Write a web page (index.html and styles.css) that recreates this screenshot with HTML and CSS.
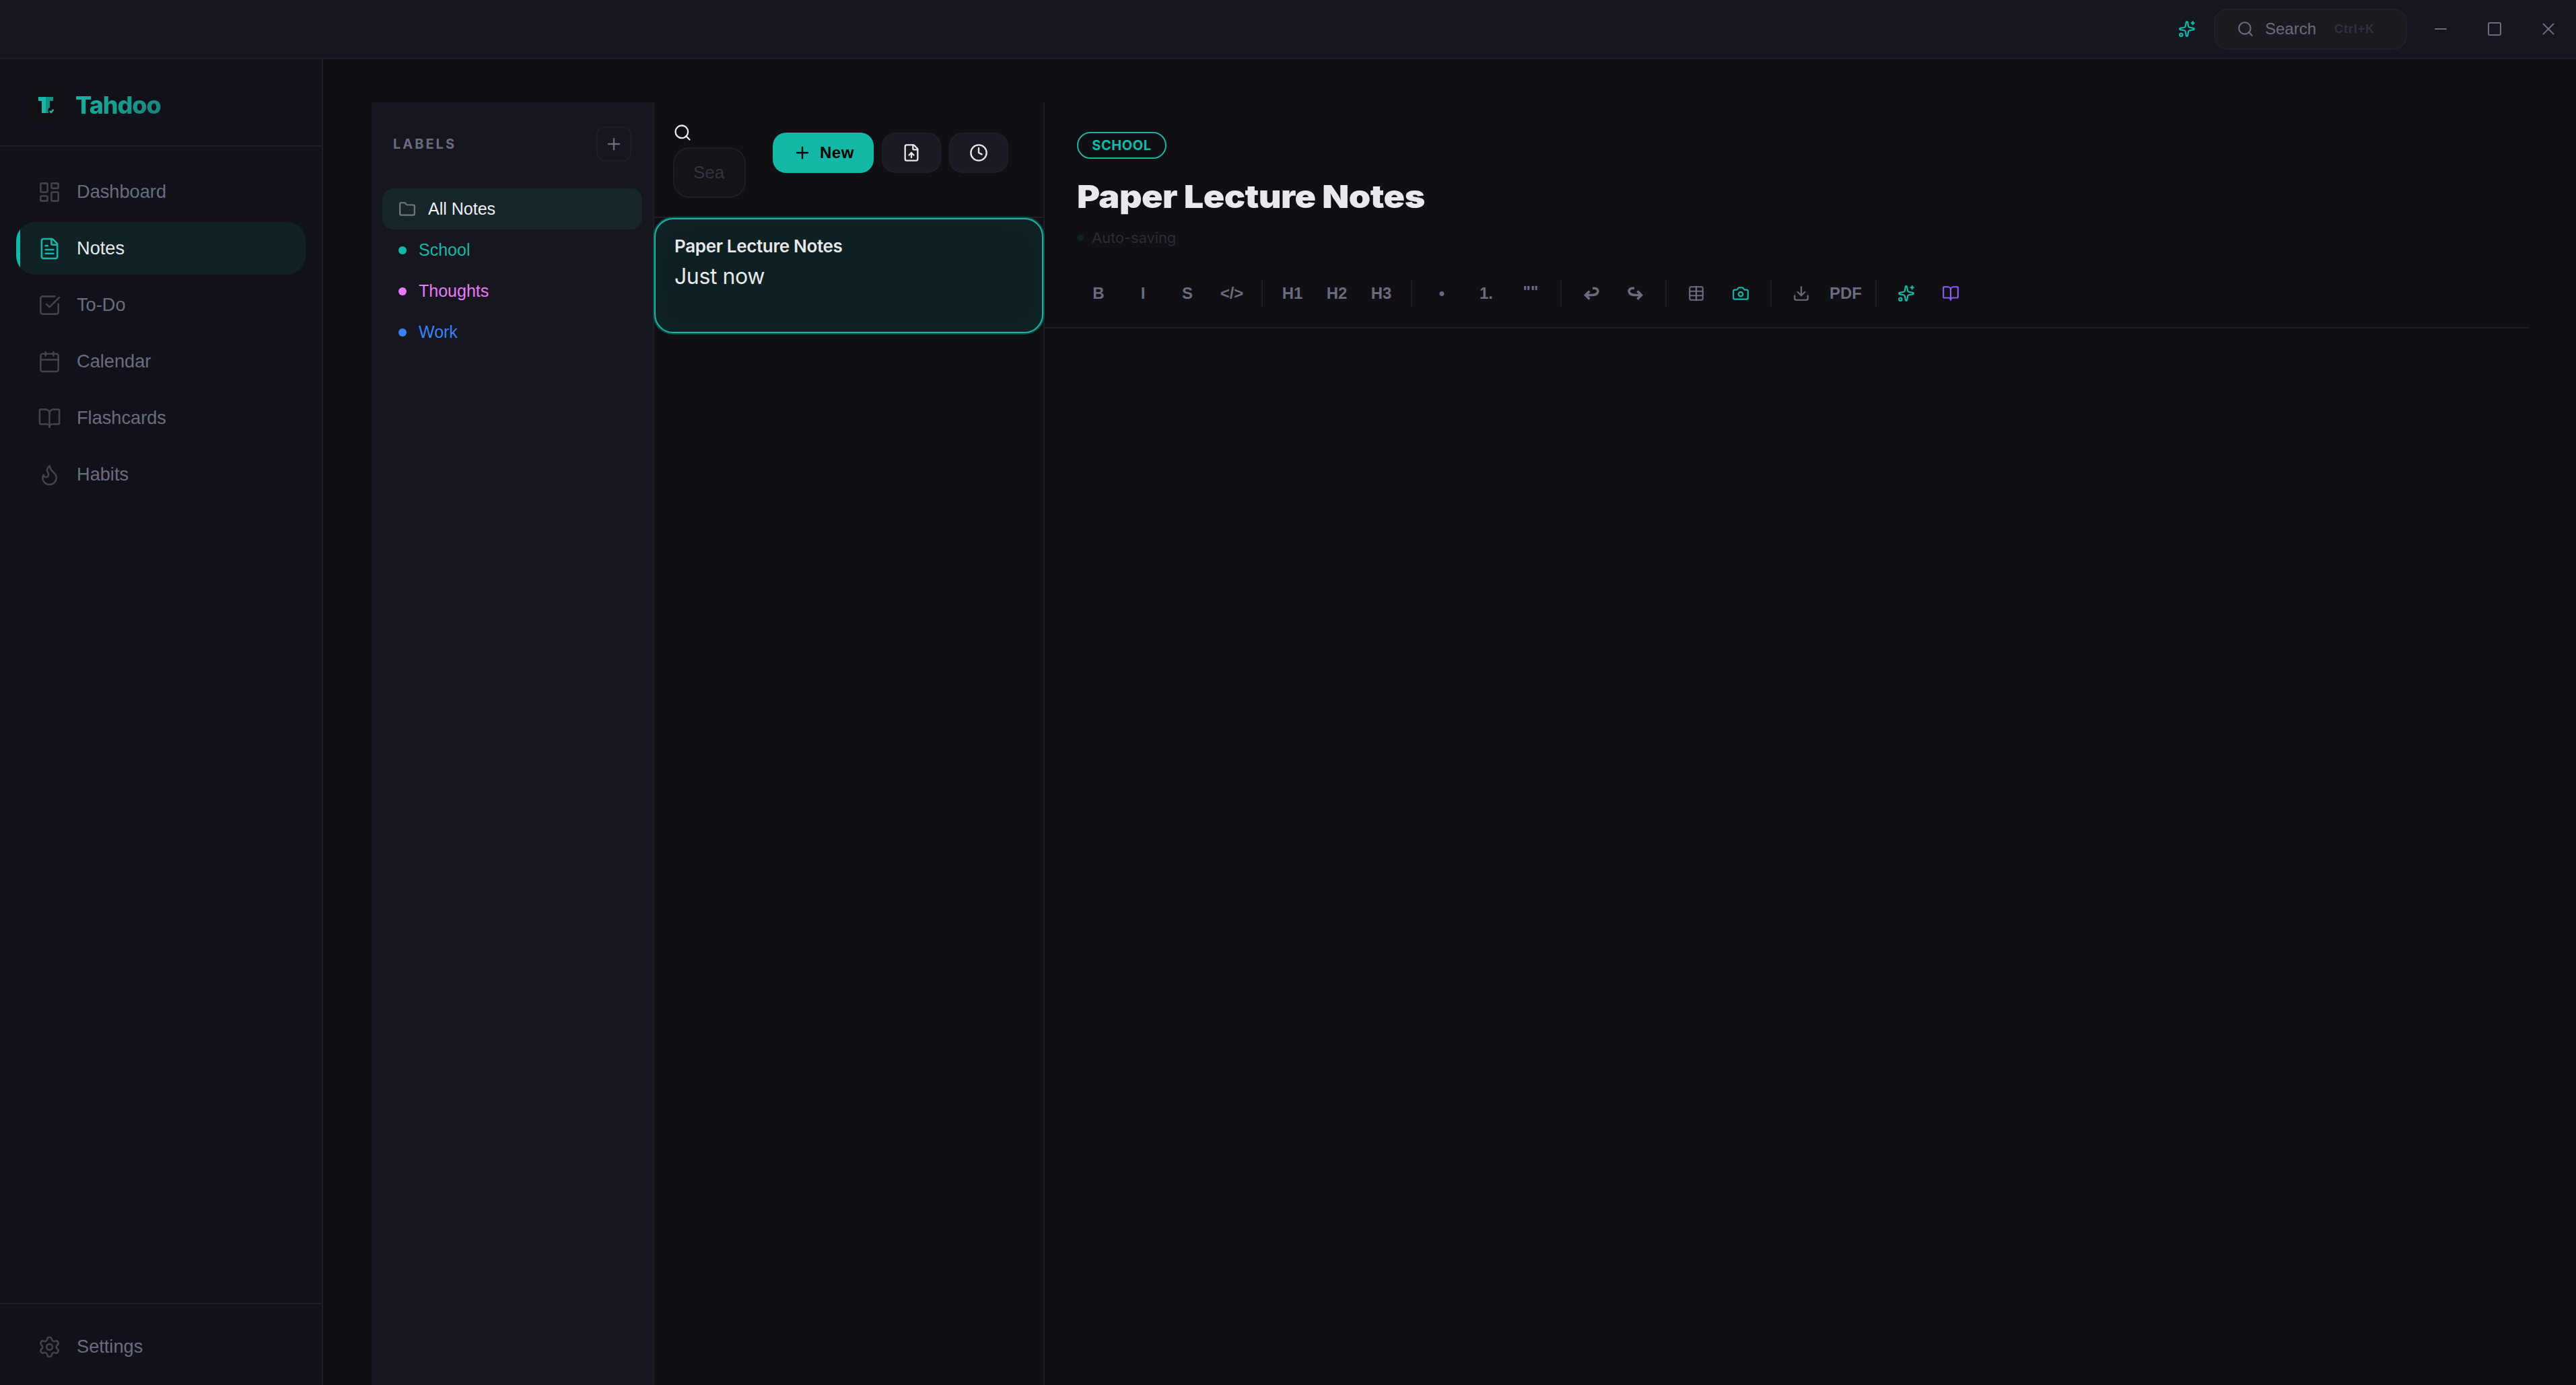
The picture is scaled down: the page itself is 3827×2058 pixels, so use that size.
FILE: index.html
```html
<!DOCTYPE html>
<html lang="en">

<head>
    <meta charset="UTF-8">
    <meta name="viewport" content="width=device-width, initial-scale=1.0">
    <title>Tahdoo</title>
    <link rel="stylesheet" href="styles.css">
</head>

<body>

    <header class="titlebar">
        <button class="ai-button">
            <svg class="icon icon-26" viewBox="0 0 24 24"><path d="M11.017 2.814a1 1 0 0 1 1.966 0l1.051 5.558a2 2 0 0 0 1.594 1.594l5.558 1.051a1 1 0 0 1 0 1.966l-5.558 1.051a2 2 0 0 0-1.594 1.594l-1.051 5.558a1 1 0 0 1-1.966 0l-1.051-5.558a2 2 0 0 0-1.594-1.594l-5.558-1.051a1 1 0 0 1 0-1.966l5.558-1.051a2 2 0 0 0 1.594-1.594z"/><path d="M20 2v4"/><path d="M22 4h-4"/><circle cx="4" cy="20" r="2"/></svg>
        </button>
        <button class="search-button">
            <svg class="icon icon-26" viewBox="0 0 24 24"><circle cx="11" cy="11" r="8"/><path d="m21 21-4.34-4.34"/></svg>
            <span>Search</span>
            <span class="shortcut">Ctrl+K</span>
        </button>
        <div class="window-controls">
            <button><svg class="icon icon-28" viewBox="0 0 28 28"><path d="M6 14h16"/></svg></button>
            <button><svg class="icon icon-28" viewBox="0 0 28 28"><rect x="5" y="5" width="18" height="18" rx="2"/></svg></button>
            <button><svg class="icon icon-28" viewBox="0 0 28 28"><path d="M21.5 6.5l-15 15"/><path d="M6.5 6.5l15 15"/></svg></button>
        </div>
    </header>

    <div class="app">
        <aside class="sidebar">
            <div class="logo">
                <svg class="logo-image" viewBox="0 0 48 48">
                    <rect width="48" height="48" rx="9" fill="#111115"/>
                    <path d="M13 12h11v24h-6V18h-5z" fill="#18b5a5"/>
                    <path d="M24 12h11v6h-5v9.5c-2 1-3 3-2.5 5.5l.8 3H24z" fill="#12917f"/>
                    <path d="M29.8 32.8l2.2 2.2 3.4-4.2" fill="none" stroke="#28b5a3" stroke-width="2.4"/>
                </svg>
                <span class="logo-text">Tahdoo</span>
            </div>

            <nav class="menu">
                <button class="menu-item">
                    <svg class="icon icon-35" viewBox="0 0 24 24"><rect width="7" height="9" x="3" y="3" rx="1"/><rect width="7" height="5" x="14" y="3" rx="1"/><rect width="7" height="9" x="14" y="12" rx="1"/><rect width="7" height="5" x="3" y="16" rx="1"/></svg>
                    <span>Dashboard</span>
                </button>
                <button class="menu-item active">
                    <svg class="icon icon-35" viewBox="0 0 24 24"><path d="M6 22a2 2 0 0 1-2-2V4a2 2 0 0 1 2-2h8a2.4 2.4 0 0 1 1.704.706l3.588 3.588A2.4 2.4 0 0 1 20 8v12a2 2 0 0 1-2 2z"/><path d="M14 2v5a1 1 0 0 0 1 1h5"/><path d="M10 9H8"/><path d="M16 13H8"/><path d="M16 17H8"/></svg>
                    <span>Notes</span>
                </button>
                <button class="menu-item">
                    <svg class="icon icon-35" viewBox="0 0 24 24"><path d="M21 10.656V19a2 2 0 0 1-2 2H5a2 2 0 0 1-2-2V5a2 2 0 0 1 2-2h12.344"/><path d="m9 11 3 3L22 4"/></svg>
                    <span>To-Do</span>
                </button>
                <button class="menu-item">
                    <svg class="icon icon-35" viewBox="0 0 24 24"><path d="M8 2v4"/><path d="M16 2v4"/><rect width="18" height="18" x="3" y="4" rx="2"/><path d="M3 10h18"/></svg>
                    <span>Calendar</span>
                </button>
                <button class="menu-item">
                    <svg class="icon icon-35" viewBox="0 0 24 24"><path d="M12 7v14"/><path d="M3 18a1 1 0 0 1-1-1V4a1 1 0 0 1 1-1h5a4 4 0 0 1 4 4 4 4 0 0 1 4-4h5a1 1 0 0 1 1 1v13a1 1 0 0 1-1 1h-6a3 3 0 0 0-3 3 3 3 0 0 0-3-3z"/></svg>
                    <span>Flashcards</span>
                </button>
                <button class="menu-item">
                    <svg class="icon icon-35" viewBox="0 0 24 24"><path d="M12 3q1 4 4 6.5t3 5.5a1 1 0 0 1-14 0 5 5 0 0 1 1-3 1 1 0 0 0 5 0c0-2-1.5-3-1.5-5q0-2 2.5-4"/></svg>
                    <span>Habits</span>
                </button>
            </nav>

            <div class="sidebar-footer">
                <button class="menu-item">
                    <svg class="icon icon-35" viewBox="0 0 24 24"><path d="M9.671 4.136a2.34 2.34 0 0 1 4.659 0 2.34 2.34 0 0 0 3.319 1.915 2.34 2.34 0 0 1 2.33 4.033 2.34 2.34 0 0 0 0 3.831 2.34 2.34 0 0 1-2.33 4.033 2.34 2.34 0 0 0-3.319 1.915 2.34 2.34 0 0 1-4.659 0 2.34 2.34 0 0 0-3.32-1.915 2.34 2.34 0 0 1-2.33-4.033 2.34 2.34 0 0 0 0-3.831A2.34 2.34 0 0 1 6.35 6.051a2.34 2.34 0 0 0 3.319-1.915"/><circle cx="12" cy="12" r="3"/></svg>
                    <span>Settings</span>
                </button>
            </div>
        </aside>

        <main class="notes-page">
            <section class="labels">
                <div class="labels-header">
                    <h2>LABELS</h2>
                    <button class="add-label">
                        <svg class="icon icon-28" viewBox="0 0 24 24"><path d="M5 12h14"/><path d="M12 5v14"/></svg>
                    </button>
                </div>
                <button class="label-item active">
                    <svg class="icon icon-26" viewBox="0 0 24 24"><path d="M20 20a2 2 0 0 0 2-2V8a2 2 0 0 0-2-2h-7.9a2 2 0 0 1-1.69-.9L9.6 3.9A2 2 0 0 0 7.93 3H4a2 2 0 0 0-2 2v13a2 2 0 0 0 2 2Z"/></svg>
                    All Notes
                </button>
                <button class="label-item school"><span class="dot"></span>School</button>
                <button class="label-item thoughts"><span class="dot"></span>Thoughts</button>
                <button class="label-item work"><span class="dot"></span>Work</button>
            </section>

            <section class="notes-list">
                <div class="list-header">
                    <div class="list-search">
                        <svg class="icon icon-28" viewBox="0 0 24 24"><circle cx="11" cy="11" r="8"/><path d="m21 21-4.34-4.34"/></svg>
                        <div class="search-input"><span>Sea</span></div>
                    </div>
                    <div class="list-actions">
                        <button class="new-button">
                            <svg class="icon icon-28" viewBox="0 0 24 24"><path d="M5 12h14"/><path d="M12 5v14"/></svg>
                            New
                        </button>
                        <button class="square-button">
                            <svg class="icon icon-28" viewBox="0 0 24 24"><path d="M6 22a2 2 0 0 1-2-2V4a2 2 0 0 1 2-2h8a2.4 2.4 0 0 1 1.704.706l3.588 3.588A2.4 2.4 0 0 1 20 8v12a2 2 0 0 1-2 2z"/><path d="M14 2v5a1 1 0 0 0 1 1h5"/><path d="M12 12v6"/><path d="m15 15-3-3-3 3"/></svg>
                        </button>
                        <button class="square-button">
                            <svg class="icon icon-28" viewBox="0 0 24 24"><circle cx="12" cy="12" r="10"/><path d="M12 6v6l4 2"/></svg>
                        </button>
                    </div>
                </div>
                <div class="note-card">
                    <h3>Paper Lecture Notes</h3>
                    <div class="note-date">Just now</div>
                </div>
            </section>

            <section class="editor">
                <div class="editor-header">
                    <span class="tag">SCHOOL</span>
                    <h1>Paper Lecture Notes</h1>
                    <div class="saving"><span class="saving-dot"></span>Auto-saving</div>
                    <div class="toolbar">
                        <button>B</button>
                        <button>I</button>
                        <button>S</button>
                        <button>&lt;/&gt;</button>
                        <span class="divider"></span>
                        <button>H1</button>
                        <button>H2</button>
                        <button>H3</button>
                        <span class="divider"></span>
                        <button>•</button>
                        <button>1.</button>
                        <button class="quote">""</button>
                        <span class="divider"></span>
                        <button><svg class="arrow" viewBox="0 0 24 24"><path d="M14 4.5c6-1 9 2 7.5 6-1 2.5-4 4-9.5 4H4"/><path d="M9.5 8.5 3.5 14.5l6 6"/></svg></button>
                        <button><svg class="arrow flip" viewBox="0 0 24 24"><path d="M14 4.5c6-1 9 2 7.5 6-1 2.5-4 4-9.5 4H4"/><path d="M9.5 8.5 3.5 14.5l6 6"/></svg></button>
                        <span class="divider"></span>
                        <button><svg class="icon icon-26" viewBox="0 0 24 24"><path d="M12 3v18"/><rect width="18" height="18" x="3" y="3" rx="2"/><path d="M3 9h18"/><path d="M3 15h18"/></svg></button>
                        <button class="teal"><svg class="icon icon-26" viewBox="0 0 24 24"><path d="M13.997 4a2 2 0 0 1 1.76 1.05l.486.9A2 2 0 0 0 18.003 7H20a2 2 0 0 1 2 2v9a2 2 0 0 1-2 2H4a2 2 0 0 1-2-2V9a2 2 0 0 1 2-2h1.997a2 2 0 0 0 1.759-1.048l.489-.904A2 2 0 0 1 10.004 4z"/><circle cx="12" cy="13" r="3"/></svg></button>
                        <span class="divider"></span>
                        <button><svg class="icon icon-26" viewBox="0 0 24 24"><path d="M12 15V3"/><path d="M21 15v4a2 2 0 0 1-2 2H5a2 2 0 0 1-2-2v-4"/><path d="m7 10 5 5 5-5"/></svg></button>
                        <button>PDF</button>
                        <span class="divider"></span>
                        <button class="teal"><svg class="icon icon-26" viewBox="0 0 24 24"><path d="M11.017 2.814a1 1 0 0 1 1.966 0l1.051 5.558a2 2 0 0 0 1.594 1.594l5.558 1.051a1 1 0 0 1 0 1.966l-5.558 1.051a2 2 0 0 0-1.594 1.594l-1.051 5.558a1 1 0 0 1-1.966 0l-1.051-5.558a2 2 0 0 0-1.594-1.594l-5.558-1.051a1 1 0 0 1 0-1.966l5.558-1.051a2 2 0 0 0 1.594-1.594z"/><path d="M20 2v4"/><path d="M22 4h-4"/><circle cx="4" cy="20" r="2"/></svg></button>
                        <button class="purple"><svg class="icon icon-26" viewBox="0 0 24 24"><path d="M12 7v14"/><path d="M3 18a1 1 0 0 1-1-1V4a1 1 0 0 1 1-1h5a4 4 0 0 1 4 4 4 4 0 0 1 4-4h5a1 1 0 0 1 1 1v13a1 1 0 0 1-1 1h-6a3 3 0 0 0-3 3 3 3 0 0 0-3-3z"/></svg></button>
                    </div>
                </div>
            </section>
        </main>
    </div>

</body>

</html>
```
FILE: styles.css
```css
* {
    box-sizing: border-box;
}

body {
    display: flex;
    flex-direction: column;
    height: 100vh;
    margin: 0;
    overflow: hidden;
    font-family: Inter, sans-serif;
    font-size: 32px;
    background-color: #0f0f14;
    color: #e8e8ed;
}

h1, h2, h3 {
    margin: 0;
}

button {
    display: flex;
    align-items: center;
    margin: 0;
    padding: 0;
    border: none;
    background: none;
    font-family: "Liberation Sans", Arial, sans-serif;
    color: #6b6b80;
}

.icon {
    display: block;
    flex-shrink: 0;
    fill: none;
    stroke: currentColor;
    stroke-width: 2;
    stroke-linecap: round;
    stroke-linejoin: round;
}

.icon-26 {
    width: 26px;
    height: 26px;
}

.icon-28 {
    width: 28px;
    height: 28px;
}

.icon-35 {
    width: 35px;
    height: 35px;
    stroke-width: 1.75;
}

/* top bar */
.titlebar {
    display: flex;
    align-items: center;
    justify-content: flex-end;
    flex-shrink: 0;
    height: 88px;
    padding-right: 1px;
    border-bottom: 2px solid #1e1e28;
    background-color: #16161e;
}

.ai-button {
    margin-right: 27px;
    color: #14b8a6;
}

.search-button {
    width: 287px;
    height: 61px;
    margin-right: 10px;
    padding-left: 32px;
    border: 2px solid #1f1f29;
    border-radius: 20px;
    background-color: #1b1a20;
    font-size: 24px;
}

.search-button .icon {
    margin-right: 16px;
}

.shortcut {
    margin-left: 27px;
    font-size: 18px;
    font-weight: bold;
    letter-spacing: 0.9px;
    color: #32323d;
}

.window-controls {
    display: flex;
}

.window-controls button {
    justify-content: center;
    width: 80px;
    height: 86px;
}

.app {
    display: flex;
    flex: 1;
    min-height: 0;
}

/* sidebar */
.sidebar {
    display: flex;
    flex-direction: column;
    width: 480px;
    border-right: 2px solid #1e1e28;
    background-color: #111119;
}

.logo {
    display: flex;
    align-items: center;
    gap: 20px;
    height: 130px;
    padding-top: 8px;
    padding-left: 44px;
    border-bottom: 2px solid #1e1e28;
}

.logo-image {
    width: 48px;
    height: 48px;
}

.logo-text {
    font-size: 36px;
    font-weight: 800;
    letter-spacing: -1.1px;
    background: linear-gradient(135deg, #14b8a6, #1a7f77);
    -webkit-background-clip: text;
    background-clip: text;
    color: transparent;
}

.menu {
    display: flex;
    flex-direction: column;
    flex: 1;
    gap: 6px;
    padding: 28px 24px;
}

.menu-item {
    gap: 23px;
    width: 430px;
    height: 78px;
    padding-left: 32px;
    border-radius: 28px;
    overflow: hidden;
    font-size: 27.2px;
}

.menu-item .icon {
    color: #43434e;
}

.menu-item.active {
    background: linear-gradient(90deg, #14b8a6 6px, #112226 6px);
    color: #e8e8ed;
}

.menu-item.active .icon {
    color: #14b8a6;
}

.sidebar-footer {
    height: 122px;
    padding: 24px;
    border-top: 2px solid #1e1e28;
}

.notes-page {
    display: flex;
    flex: 1;
    padding: 64px 70px 0 72px;
}

/* labels */
.labels {
    width: 420px;
    padding: 36px 16px;
    border-right: 2px solid #1e1e28;
    background-color: #16161e;
}

.labels-header {
    display: flex;
    align-items: center;
    justify-content: space-between;
    padding: 0 16px;
    margin-bottom: 40px;
}

.labels-header h2 {
    font-size: 20px;
    font-weight: 700;
    letter-spacing: 3px;
    color: #6b6b80;
}

.add-label {
    justify-content: center;
    width: 52px;
    height: 52px;
    border: 2px solid #1e1e28;
    border-radius: 12px;
}

.label-item {
    gap: 18px;
    width: 100%;
    height: 61px;
    padding-left: 24px;
    border-radius: 16px;
    font-size: 25px;
}

.label-item.active {
    background-color: #16262a;
    color: #f0f0f5;
}

.label-item .icon {
    color: #6e7a80;
}

.dot {
    width: 12px;
    height: 12px;
    border-radius: 50%;
    background-color: currentColor;
}

.school {
    color: #14b8a6;
}

.thoughts {
    color: #e879f9;
}

.work {
    color: #3b82f6;
}

/* list of notes */
.notes-list {
    width: 580px;
    border-right: 2px solid #1e1e28;
}

.list-header {
    display: flex;
    align-items: flex-start;
    gap: 40px;
    height: 172px;
    padding: 31px 28px 0;
    border-bottom: 2px solid #1e1e28;
}

.search-input {
    display: flex;
    align-items: center;
    width: 108px;
    height: 75px;
    margin-top: 8px;
    padding-left: 28px;
    border: 2px solid #1e1e26;
    border-radius: 24px;
    background-color: #131318;
    font-family: "Liberation Sans", Arial, sans-serif;
    font-size: 26px;
    color: #35353f;
}

.list-actions {
    display: flex;
    gap: 12px;
    margin-top: 14px;
}

.new-button {
    gap: 12px;
    width: 150px;
    height: 60px;
    padding-left: 30px;
    border-radius: 20px;
    background-color: #14b8a6;
    font-size: 24px;
    font-weight: bold;
    letter-spacing: 0.5px;
    color: #000;
}

.square-button {
    justify-content: center;
    width: 88px;
    height: 60px;
    border: 2px solid #1e1e26;
    border-radius: 20px;
    background-color: #1a1a22;
    color: #e8e8ed;
}

.note-card {
    position: relative;
    height: 171px;
    padding: 24px 28px;
    border: 2px solid #22b0a1;
    border-radius: 28px;
    background-color: #0f2023;
    box-shadow: 0 0 0 2px #0f4f4c, inset 0 0 40px rgba(20, 184, 166, 0.04);
}

.note-card h3 {
    font-size: 26px;
    font-weight: 600;
    line-height: 32px;
    letter-spacing: -0.35px;
}

.note-date {
    margin-top: 7px;
    line-height: 44px;
    letter-spacing: -0.4px;
}

/* editor */
.editor {
    flex: 1;
}

.editor-header {
    height: 336px;
    padding: 44px 48px 0;
    border-bottom: 2px solid #1e1e28;
}

.tag {
    display: flex;
    align-items: center;
    justify-content: center;
    width: 133px;
    height: 40px;
    border: 2px solid #22b0a1;
    border-radius: 20px;
    font-size: 20px;
    font-weight: 700;
    letter-spacing: 0.6px;
    color: #14b8a6;
}

/* wide heavy heading */
.editor-header h1 {
    margin-top: 28px;
    font-size: 47px;
    font-weight: 900;
    line-height: 56px;
    letter-spacing: -0.5px;
    transform: scaleX(1.108);
    transform-origin: left;
}

.saving {
    display: flex;
    align-items: center;
    gap: 12px;
    margin-top: 16px;
    font-size: 22px;
    line-height: 34px;
    letter-spacing: -0.1px;
    color: #2c2c35;
}

.saving-dot {
    width: 10px;
    height: 10px;
    border-radius: 50%;
    background-color: #10211f;
}

.toolbar {
    display: flex;
    align-items: center;
    gap: 6px;
    margin-top: 36px;
    padding-left: 2px;
}

.toolbar button {
    justify-content: center;
    width: 60px;
    height: 60px;
    font-size: 24px;
    font-weight: bold;
}

.toolbar .quote {
    padding-bottom: 4px;
}

.toolbar .teal {
    color: #14b8a6;
}

.toolbar .purple {
    color: #8b5cf6;
}

.divider {
    width: 2px;
    height: 40px;
    margin: 0 8px;
    background-color: #1e1e28;
}

.arrow {
    width: 24px;
    height: 24px;
    fill: none;
    stroke: currentColor;
    stroke-width: 3.6;
}

.flip {
    transform: scaleX(-1);
}
```
